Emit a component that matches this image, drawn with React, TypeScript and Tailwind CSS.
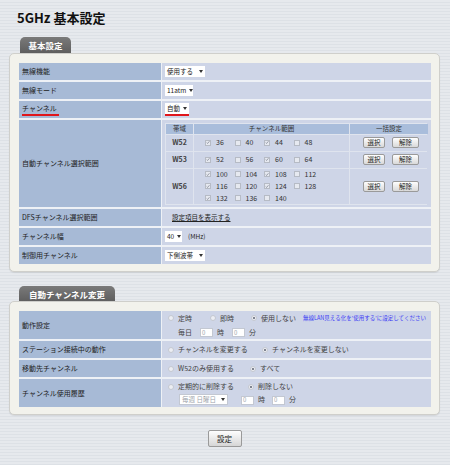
import React from "react";

type Kids = { children?: React.ReactNode };

function Arrow() {
  return (
    <svg width="4" height="3" viewBox="0 0 4 3" className="ml-[3px] shrink-0">
      <path d="M0 0h4L2 3z" fill="#333" />
    </svg>
  );
}

function Select({ label, w, muted = false }: { label: string; w: string; muted?: boolean }) {
  return (
    <span
      className={`inline-flex h-[11px] items-center justify-between bg-white pl-[2px] pr-[2px] text-[6.5px] leading-none ${w} ${
        muted ? "border border-[#c3c8d2] text-[#a0a4ac]" : "text-[#222]"
      }`}
    >
      <span>{label}</span>
      <Arrow />
    </span>
  );
}

function Check({ on }: { on: boolean }) {
  return (
    <span className="inline-flex size-[6px] shrink-0 items-center justify-center border border-[#b6bbc5] bg-[#e6e9f0]">
      {on && (
        <svg width="5" height="5" viewBox="0 0 5 5">
          <path d="M0.8 2.5L2 3.7L4.3 0.9" stroke="#6f7584" strokeWidth="0.8" fill="none" />
        </svg>
      )}
    </span>
  );
}

function Radio({ on = false }: { on?: boolean }) {
  return (
    <span className="inline-flex size-[6px] shrink-0 items-center justify-center rounded-full border border-[#c4c8d0] bg-[#eceef3]">
      {on && <span className="size-[2px] rounded-full bg-[#5d6270]" />}
    </span>
  );
}

function Btn({ children, w }: Kids & { w: string }) {
  return (
    <span
      className={`inline-flex h-[11px] items-center justify-center rounded-[2px] border border-[#9a9a9a] bg-gradient-to-b from-[#fefefe] to-[#d9d9d9] text-[6.5px] leading-none text-[#222] ${w}`}
    >
      {children}
    </span>
  );
}

function Num({ value }: { value: string }) {
  return (
    <span className="inline-flex h-[9px] w-[13px] items-center border border-[#c3c8d2] bg-white pl-[1px] text-[6px] leading-none text-[#a0a4ac]">
      {value}
    </span>
  );
}

function Row({ label, h, children, mark = false }: Kids & { label: string; h: string; mark?: boolean }) {
  return (
    <div className={`grid grid-cols-[142px_1fr] gap-x-[1px] ${h}`}>
      <div className="flex items-center bg-[#a7bad6] pl-[3px] text-[7px] text-[#222]">
        {mark ? <span className="border-b-2 border-[#e0161b] pb-[1px] pr-[2px]">{label}</span> : label}
      </div>
      <div className="flex items-center bg-[#ced5e7] pl-[3px] text-[7px] text-[#222]">{children}</div>
    </div>
  );
}

function Tab({ children, w }: Kids & { w: string }) {
  return (
    <div
      className={`flex h-[16px] items-center justify-center rounded-t-[5px] bg-gradient-to-b from-[#7a7a7a] to-[#5e5e5e] text-[8.5px] font-bold text-white ${w}`}
    >
      {children}
    </div>
  );
}

function Panel({ children }: Kids) {
  return (
    <div className="ml-[9px] w-[431px] rounded-[5px] border border-[#cfcfcb] bg-[#f2f2ec] pb-[7px] pl-[9px] pr-[8px] pt-[9px] shadow-[0_1px_1px_rgba(0,0,0,0.08)]">
      <div className="flex flex-col gap-[2px] bg-[#eef1f6]">{children}</div>
    </div>
  );
}

const ranges: { band: string; h: string; rows: [string, boolean][][] }[] = [
  { band: "W52", h: "h-[16px]", rows: [[["36", true], ["40", false], ["44", true], ["48", false]]] },
  { band: "W53", h: "h-[16px]", rows: [[["52", true], ["56", false], ["60", true], ["64", false]]] },
  {
    band: "W56",
    h: "h-[35px]",
    rows: [
      [["100", true], ["104", false], ["108", true], ["112", false]],
      [["116", true], ["120", false], ["124", true], ["128", false]],
      [["132", true], ["136", false], ["140", false]],
    ],
  },
];

function ChannelTable() {
  return (
    <div className="grid w-[262px] grid-cols-[27px_155px_78px] gap-[1px] bg-[#dfe4ee] p-[1px] text-[#333]">
      <div className="flex h-[10px] items-center justify-center bg-[#a9bddb] text-[6.5px]">帯域</div>
      <div className="flex h-[10px] items-center justify-center bg-[#a9bddb] text-[6.5px]">チャンネル範囲</div>
      <div className="flex h-[10px] items-center justify-center bg-[#a9bddb] text-[6.5px]">一括設定</div>
      {ranges.map((r) => (
        <React.Fragment key={r.band}>
          <div className={`flex items-center justify-center bg-[#ced5e7] text-[7px] font-semibold text-[#444] ${r.h}`}>
            {r.band}
          </div>
          <div className={`flex flex-col justify-center gap-[1px] bg-[#ced5e7] pl-[11px] ${r.h}`}>
            {r.rows.map((line, i) => (
              <div key={i} className="flex h-[11px] items-center">
                {line.map(([n, on]) => (
                  <span key={n} className="flex w-[29.5px] items-center gap-[5px] text-[7px] text-[#333]">
                    <Check on={on} />
                    {n}
                  </span>
                ))}
              </div>
            ))}
          </div>
          <div className={`flex items-center gap-[7px] bg-[#ced5e7] pl-[13px] ${r.h}`}>
            <Btn w="w-[22px]">選択</Btn>
            <Btn w="w-[27px]">解除</Btn>
          </div>
        </React.Fragment>
      ))}
    </div>
  );
}

function Opt({ on, w, children }: Kids & { on?: boolean; w?: string }) {
  return (
    <span className={`flex items-center gap-[4px] ${w ?? ""}`}>
      <Radio on={on} />
      <span>{children}</span>
    </span>
  );
}

export default function App() {
  return (
    <div className="h-[465px] w-[450px] overflow-hidden bg-[repeating-linear-gradient(180deg,#e6e9ed_0px,#e6e9ed_2px,#dde1e6_2px,#dde1e6_3px)] font-['Noto_Sans_CJK_JP','Noto_Sans',sans-serif] text-[#222]">
      <h1 className="ml-[17px] mt-[8px] text-[13px] font-bold leading-[20px] text-[#111]">5GHz 基本設定</h1>

      {/* 基本設定 */}
      <div className="ml-[20px] mt-[9px]">
        <Tab w="w-[51px]">基本設定</Tab>
      </div>
      <Panel>
        <Row label="無線機能" h="h-[17px]">
          <Select label="使用する" w="w-[40px]" />
        </Row>
        <Row label="無線モード" h="h-[17px]">
          <Select label="11atm" w="w-[28px]" />
        </Row>
        <Row label="チャンネル" h="h-[17px]" mark>
          <span className="border-b-2 border-[#e0161b]">
            <Select label="自動" w="w-[24px]" />
          </span>
        </Row>
        <Row label="自動チャンネル選択範囲" h="h-[87px]">
          <ChannelTable />
        </Row>
        <Row label="DFSチャンネル選択範囲" h="h-[17px]">
          <span className="ml-[7px] text-[6.5px] underline">設定項目を表示する</span>
        </Row>
        <Row label="チャンネル幅" h="h-[17px]">
          <Select label="40" w="w-[17px]" />
          <span className="ml-[6px] text-[6.5px]">(MHz)</span>
        </Row>
        <Row label="制御用チャンネル" h="h-[17px]">
          <Select label="下側波帯" w="w-[40px]" />
        </Row>
      </Panel>

      {/* 自動チャンネル変更 */}
      <div className="ml-[19px] mt-[14px]">
        <Tab w="w-[96px]">自動チャンネル変更</Tab>
      </div>
      <div className="-mt-px">
        <Panel>
          <Row label="動作設定" h="h-[28px]">
            <div className="flex flex-col gap-[3px] pl-[3px] text-[#444]">
              <div className="flex items-center">
                <Opt w="w-[42px]">定時</Opt>
                <Opt w="w-[41px]">即時</Opt>
                <Opt on w="w-[52px]">使用しない</Opt>
                <span className="text-[5.5px] text-[#3a3af5]">無線LAN見える化を'使用する'に設定してください</span>
              </div>
              <div className="flex items-center pl-[10px]">
                <span>毎日</span>
                <span className="ml-[8px]">
                  <Num value="0" />
                </span>
                <span className="ml-[4px]">時</span>
                <span className="ml-[8px]">
                  <Num value="0" />
                </span>
                <span className="ml-[4px]">分</span>
              </div>
            </div>
          </Row>
          <Row label="ステーション接続中の動作" h="h-[17px]">
            <div className="flex items-center pl-[3px] text-[#444]">
              <Opt w="w-[94px]">チャンネルを変更する</Opt>
              <Opt on>チャンネルを変更しない</Opt>
            </div>
          </Row>
          <Row label="移動先チャンネル" h="h-[17px]">
            <div className="flex items-center pl-[3px] text-[#444]">
              <Opt w="w-[82px]">W52のみ使用する</Opt>
              <Opt on>すべて</Opt>
            </div>
          </Row>
          <Row label="チャンネル使用履歴" h="h-[28px]">
            <div className="flex flex-col gap-[2px] pl-[3px] text-[#444]">
              <div className="flex items-center">
                <Opt w="w-[80px]">定期的に削除する</Opt>
                <Opt on>削除しない</Opt>
              </div>
              <div className="flex items-center pl-[11px]">
                <Select label="毎週 日曜日" w="w-[49px]" muted />
                <span className="ml-[13px]">
                  <Num value="0" />
                </span>
                <span className="ml-[4px]">時</span>
                <span className="ml-[7px]">
                  <Num value="0" />
                </span>
                <span className="ml-[4px]">分</span>
              </div>
            </div>
          </Row>
        </Panel>
      </div>

      <div className="mt-[15px] flex justify-center pr-px">
        <span className="inline-flex h-[17px] w-[34px] items-center justify-center rounded-[2px] border border-[#9a9a9a] bg-gradient-to-b from-[#fefefe] to-[#d6d6d6] text-[7.5px] text-[#222]">
          設定
        </span>
      </div>
    </div>
  );
}
